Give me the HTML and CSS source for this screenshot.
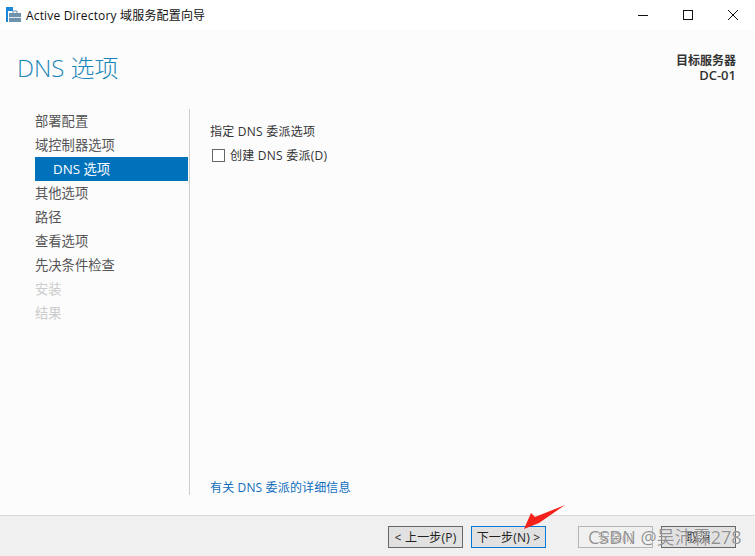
FILE: index.html
```html
<!DOCTYPE html>
<html>
<head>
    <title>Active Directory 域服务配置向导</title>
    <link rel="stylesheet" href="styles.css">
</head>
<body>
    <div class="window">
        <div class="titlebar">
            <svg class="app-icon" width="16" height="16" viewBox="0 0 16 16">
                <rect x="0" y="0" width="7" height="4" fill="#1e88d8"/>
                <rect x="0" y="0" width="2" height="15" fill="#1e88d8"/>
                <rect x="3" y="6" width="12" height="9" fill="#6f93ad"/>
                <rect x="3" y="10" width="12" height="1" fill="#dfe8ee"/>
                <path d="M7 6V4h4v2" fill="none" stroke="#6f93ad" stroke-width="1"/>
            </svg>
            <span class="title-text">Active Directory 域服务配置向导</span>
            <div class="window-buttons">
                <svg width="10" height="10" viewBox="0 0 10 10"><path d="M0 5.5h10" stroke="#111" fill="none"/></svg>
                <svg width="10" height="10" viewBox="0 0 10 10"><rect x="0.5" y="0.5" width="9" height="9" stroke="#111" fill="none"/></svg>
                <svg width="10" height="10" viewBox="0 0 10 10"><path d="M0 0l10 10M10 0L0 10" stroke="#111" fill="none"/></svg>
            </div>
        </div>

        <div class="main">
            <div class="header">
                <h1>DNS 选项</h1>
                <div class="target">
                    <div>目标服务器</div>
                    <div class="target-name">DC-01</div>
                </div>
            </div>

            <div class="content">
                <div class="sidebar">
                    <div class="nav-item">部署配置</div>
                    <div class="nav-item">域控制器选项</div>
                    <div class="nav-item active">DNS 选项</div>
                    <div class="nav-item">其他选项</div>
                    <div class="nav-item">路径</div>
                    <div class="nav-item">查看选项</div>
                    <div class="nav-item">先决条件检查</div>
                    <div class="nav-item disabled">安装</div>
                    <div class="nav-item disabled">结果</div>
                </div>
                <div class="panel">
                    <div class="panel-top">
                        <div class="panel-label">指定 DNS 委派选项</div>
                        <label class="check-row">
                            <span class="checkbox"></span>
                            <span>创建 DNS 委派(D)</span>
                        </label>
                    </div>
                    <a class="more-link">有关 DNS 委派的详细信息</a>
                </div>
            </div>
        </div>

        <div class="footer">
            <button class="btn">&lt; 上一步(P)</button>
            <button class="btn btn-next">下一步(N) &gt;</button>
            <button class="btn btn-install" disabled>安装(I)</button>
            <button class="btn">取消</button>
        </div>

        <svg class="arrow" width="44" height="30" viewBox="0 0 44 30">
            <path d="M1 25L8 9L12 13L42 1L16 19Z" fill="#f5211b"/>
        </svg>
        <div class="watermark">CSDN @吴沛霖278</div>
    </div>
</body>
</html>
```

FILE: styles.css
```css
* {
    box-sizing: border-box;
}

body {
    margin: 0;
    padding: 0;
    font-family: "Open Sans", "Noto Sans CJK SC", sans-serif;
    font-size: 12px;
    color: #333;
    background-color: #fcfcfc;
}

.window {
    position: relative;
    width: 755px;
    height: 556px;
    display: flex;
    flex-direction: column;
    overflow: hidden;
}

/* Title bar */
.titlebar {
    height: 30px;
    flex: none;
    display: flex;
    align-items: center;
    padding-left: 6px;
    background-color: #fff;
}

.title-text {
    margin-left: 4px;
    color: #111;
    font-size: 12px;
    letter-spacing: 0.17px;
}

.window-buttons {
    margin-left: auto;
    margin-right: 17px;
    display: flex;
    gap: 35px;
}

.window-buttons svg {
    display: block;
}

/* Main area */
.main {
    flex: 1;
    display: flex;
    flex-direction: column;
    padding-bottom: 20px;
}

.header {
    height: 79px;
    flex: none;
    display: flex;
    justify-content: space-between;
    padding: 21px 19px 0 17px;
}

.header h1 {
    margin: 0;
    font-size: 24px;
    font-weight: 300;
    line-height: 34px;
    color: #1a86b8;
}

.target {
    padding-top: 2px;
    text-align: right;
    font-weight: 600;
    font-size: 12px;
    line-height: 15px;
    color: #333;
}

.target-name {
    font-size: 13px;
}

.content {
    flex: 1;
    display: flex;
}

/* Left navigation */
.sidebar {
    width: 190px;
    flex: none;
    padding: 0 1px 0 35px;
    border-right: 1px solid #ccc;
}

.nav-item {
    height: 24px;
    line-height: 24px;
    font-size: 13.3px;
    color: #555;
}

.nav-item.active {
    padding-left: 18px;
    background-color: #0072bc;
    color: #fff;
}

.nav-item.disabled {
    color: #ccc;
}

/* Right panel */
.panel {
    flex: 1;
    display: flex;
    flex-direction: column;
    justify-content: space-between;
    padding: 14px 0 0 20px;
    letter-spacing: 0.25px;
}

.panel-label {
    line-height: 17px;
    color: #333;
}

.check-row {
    display: flex;
    align-items: center;
    gap: 5px;
    margin-top: 7px;
    padding-left: 2px;
    line-height: 17px;
}

.checkbox {
    width: 13px;
    height: 13px;
    border: 1px solid #666;
    background-color: #fff;
}

.more-link {
    line-height: 17px;
    margin-bottom: -1px;
    letter-spacing: 0.15px;
    color: #0f6cbd;
}

/* Footer buttons */
.footer {
    height: 41px;
    flex: none;
    display: flex;
    padding: 10px 19px 0 388px;
    background-color: #f0f0f0;
    border-top: 1px solid #d9d9d9;
}

.btn {
    width: 75px;
    height: 22px;
    margin-right: 8px;
    padding: 0;
    border: 1px solid #666;
    background-color: #e1e1e1;
    font-family: inherit;
    font-size: 12px;
    letter-spacing: 0.2px;
    color: #222;
}

.btn:last-child {
    margin-right: 0;
}

.btn-next {
    border-color: #0078d7;
    margin-right: 32px;
}

.btn-install {
    border-color: #b5b5b5;
    background-color: #f0f0f0;
    color: #999;
}

/* Overlays on top of the screenshot */
.arrow {
    position: absolute;
    left: 523px;
    top: 504px;
}

.watermark {
    position: absolute;
    left: 588px;
    top: 524px;
    font-size: 18px;
    line-height: 26px;
    white-space: nowrap;
    color: rgba(110, 110, 110, 0.75);
    text-shadow: 0 0 1px #fff;
}
```
